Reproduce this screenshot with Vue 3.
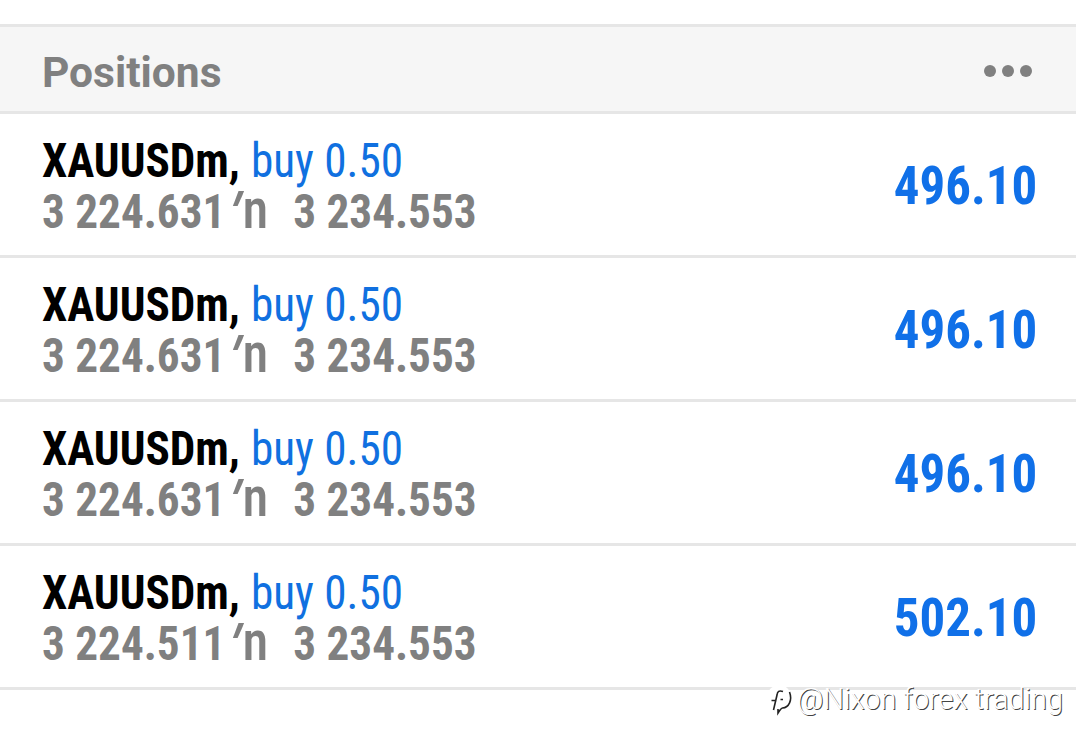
<template>
  <div class="page">
    <header class="header">
      <h1 class="title">Positions</h1>
      <svg class="more" width="48" height="12" viewBox="0 0 48 12">
        <circle cx="6" cy="6" r="6" />
        <circle cx="24" cy="6" r="6" />
        <circle cx="42" cy="6" r="6" />
      </svg>
    </header>

    <ul class="list">
      <li v-for="item in positions" :key="item.id" class="row">
        <div class="info">
          <p class="line">
            <span class="symbol">XAUUSDm,</span>
            <span class="side">buy 0.50</span>
          </p>
          <p class="line prices">
            <span class="price">{{ item.open }}</span>
            <span class="arrow"><i class="tick">′</i>n</span>
            <span class="price">{{ item.current }}</span>
          </p>
        </div>
        <span class="profit">{{ item.profit }}</span>
      </li>
    </ul>

    <div class="watermark">
      <svg class="logo" width="26" height="32" viewBox="0 0 26 32">
        <path class="logo-bg" d="M12 1a11.500 11.500 0 1 0 0 23v6c7-2 12-8 12-17C24 6 19 1 12 1z" />
        <path class="logo-line" d="M16 7.500c-4-1.500-5.500 0-6 3.500L6.500 26M4.500 16.500h5M13.500 15.500h2.500M22.500 8c3 8-.5 15.500-7 16-1.500.2-2 1-4.500 5V25" />
      </svg>
      <span class="author">@Nixon forex trading</span>
    </div>
  </div>
</template>

<script setup>
const positions = [
  { id: 1, open: "3 224.631", current: "3 234.553", profit: "496.10" },
  { id: 2, open: "3 224.631", current: "3 234.553", profit: "496.10" },
  { id: 3, open: "3 224.631", current: "3 234.553", profit: "496.10" },
  { id: 4, open: "3 224.511", current: "3 234.553", profit: "502.10" },
];
</script>

<style>
body {
  background: #fff;
}
</style>

<style scoped>
.page {
  position: relative;
  width: 1076px;
  height: 746px;
  overflow: hidden;
  box-sizing: border-box;
  padding-top: 24px;
  background: #fff;
  font-family: "Roboto Condensed", Roboto, sans-serif;
}

.header {
  display: flex;
  align-items: center;
  justify-content: space-between;
  box-sizing: border-box;
  height: 90px;
  padding: 0 44px 0 42px;
  border-top: 3px solid #e6e6e6;
  border-bottom: 3px solid #e6e6e6;
  background: #f6f6f6;
}

.title {
  margin: 7px 0 0;
  font: 700 42.500px/48px Roboto, sans-serif;
  color: #808080;
}

.more {
  margin-top: 4px;
  fill: #808080;
}

.list {
  margin: 0;
  padding: 0;
  list-style: none;
}

.row {
  display: flex;
  align-items: center;
  justify-content: space-between;
  box-sizing: border-box;
  height: 144px;
  padding: 2px 39px 0 42px;
  border-bottom: 3px solid #e6e6e6;
}

/* text is squeezed a little further than the condensed width */
.line {
  display: flex;
  height: 51px;
  margin: 0;
  font-size: 48px;
  line-height: 51px;
  font-stretch: 75%;
  white-space: pre;
  transform: scaleX(0.941);
  transform-origin: left;
}

.symbol {
  width: 222px;
  font-weight: 700;
  color: #000;
}

.side {
  color: #1070e0;
}

.prices {
  color: #808080;
}

.price {
  width: 203px;
  font-weight: 700;
}

.arrow {
  width: 64px;
  font-size: 56px;
  line-height: 46px;
  font-weight: 550;
}

.tick {
  display: inline-block;
  width: 10px;
  font-style: normal;
  font-weight: 700;
  transform: translate(-5px, 5px) skewX(-22deg);
}

.profit {
  font-size: 54px;
  font-weight: 700;
  font-stretch: 75%;
  color: #1070e8;
  transform: scaleX(0.943);
  transform-origin: right;
}

.watermark {
  position: absolute;
  left: 767px;
  top: 684px;
  display: flex;
  font: 300 28.900px/31px Roboto, sans-serif;
  color: #fff;
}

.logo {
  margin-right: 4px;
}

.logo-bg {
  fill: #fff;
}

.logo-line {
  fill: none;
  stroke: #222;
  stroke-width: 1.6;
}

.author {
  text-shadow: 1px 1px 0 #444;
}
</style>
